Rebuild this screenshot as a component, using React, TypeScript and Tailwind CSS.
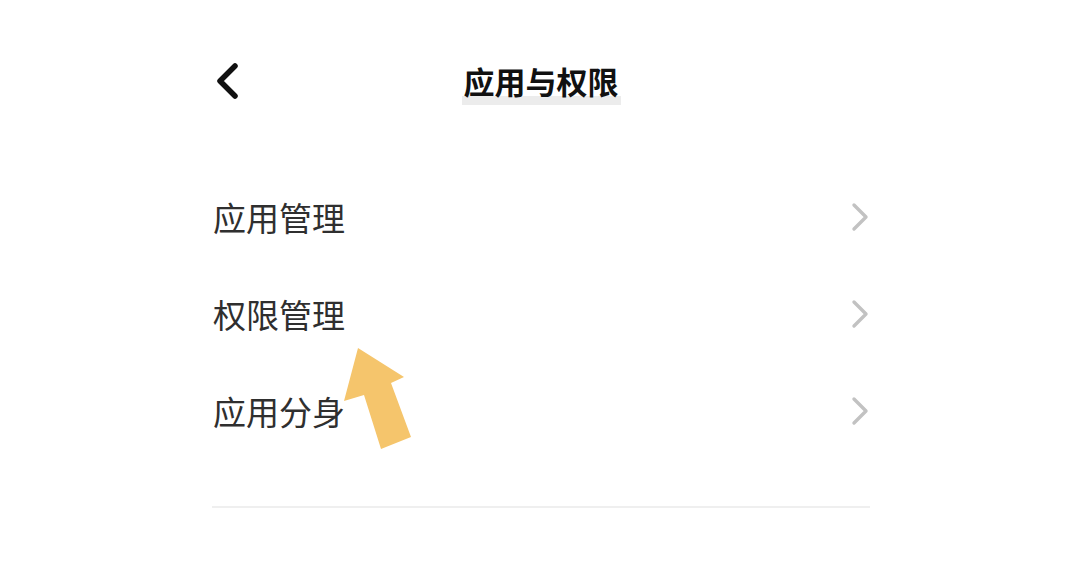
const items = ["应用管理", "权限管理", "应用分身"]

function Chevron() {
  return (
    <svg width="20" height="30" viewBox="0 0 20 30" fill="none" className="-mt-[4px]">
      <polyline points="4,3 16,15 4,27" stroke="#c2c2c2" strokeWidth="3.4" strokeLinecap="round" strokeLinejoin="round" />
    </svg>
  )
}

export default function App() {
  return (
    <div className="relative w-[1066px] h-[568px] bg-white overflow-hidden font-['Noto_Sans_CJK_SC','Noto_Sans',sans-serif]">
      <div className="ml-[212px] w-[658px] flex flex-col">
        <div className="mt-[49px] h-[64px] relative flex items-center justify-center">
          <div className="absolute left-0 top-0 h-full flex items-center">
            <svg width="28" height="36" viewBox="0 0 28 36" fill="none">
              <polyline points="23,3 8,18 23,33" stroke="#111" strokeWidth="5.5" strokeLinecap="round" strokeLinejoin="round" />
            </svg>
          </div>
          <span className="relative text-[31px] leading-[38px] font-bold text-[#111]">
            <span className="absolute left-[-2px] right-[-2px] top-[34px] h-[9px] bg-[#ececec]" />
            <span className="relative">应用与权限</span>
          </span>
        </div>
        <div className="mt-[57px] flex flex-col">
          {items.map((t) => (
            <div key={t} className="h-[97px] flex items-center justify-between">
              <span className="text-[33px] leading-[40px] text-[#2f2f2f] ml-[1px] -mt-[3px]">{t}</span>
              <Chevron />
            </div>
          ))}
        </div>
        <div className="mt-[45px] h-[2px] bg-[#efefef]" />
      </div>
      <svg className="absolute left-0 top-0" width="1066" height="568" viewBox="0 0 1066 568">
        <polygon points="358,348 404,377 391,383 411,437 381,449 364,395 344,401" fill="#f5c56c" />
      </svg>
    </div>
  )
}
